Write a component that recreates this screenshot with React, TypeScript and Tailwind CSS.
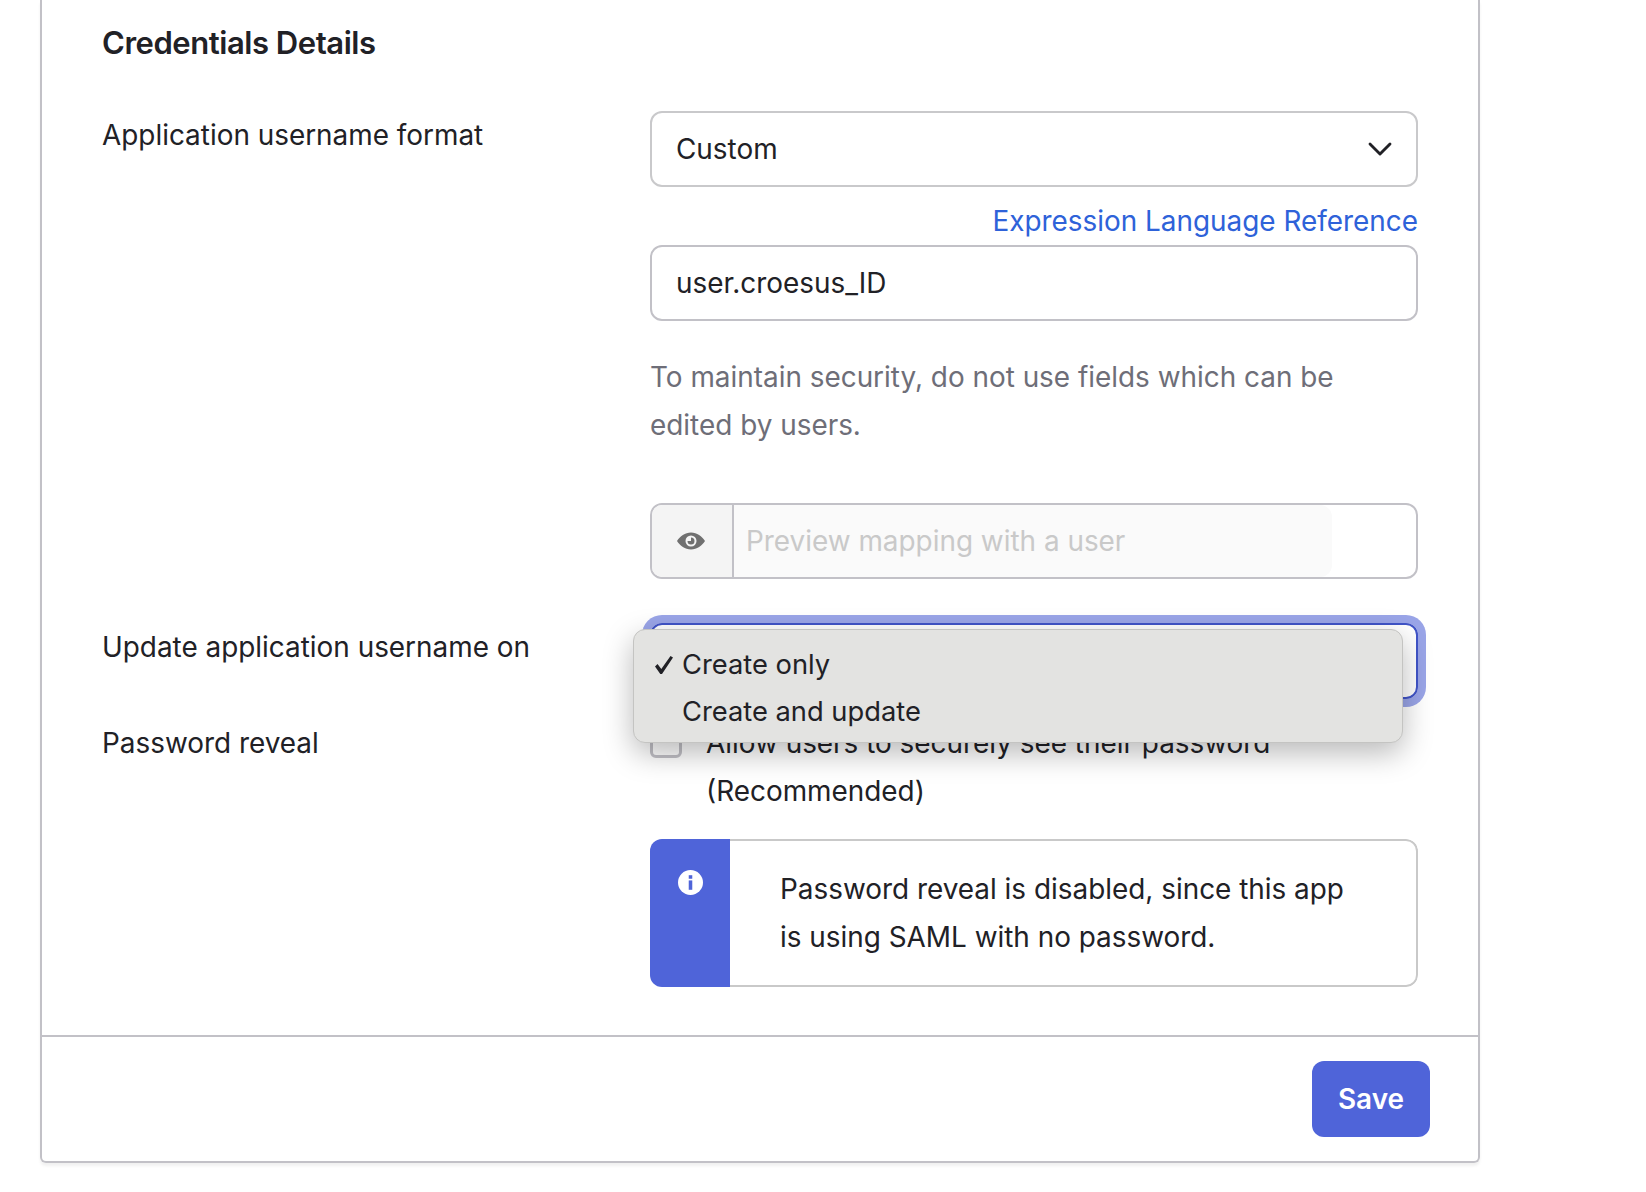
import { ChevronDown } from 'lucide-react'

const inter = "font-['Inter',sans-serif]"

function EyeIcon() {
  return (
    <svg width="28" height="18" viewBox="0 0 28 18" className="text-[#707070]">
      <path
        fillRule="evenodd"
        fill="currentColor"
        d="M14 0.500C20 0.500 25 4.300 28 9C25 13.700 20 17.500 14 17.500C8 17.500 3 13.700 0 9C3 4.300 8 0.500 14 0.500ZM14 3.500A5.500 5.500 0 1 0 14 14.500A5.500 5.500 0 1 0 14 3.500ZM14 5.500A3.500 3.500 0 1 1 10.500 9H14Z"
      />
    </svg>
  )
}

function InfoIcon() {
  return (
    <svg width="25" height="25" viewBox="0 0 24 24">
      <circle cx="12" cy="12" r="12" fill="#fff" />
      <rect x="10.300" y="10" width="3.400" height="9" fill="#4f64d9" />
      <rect x="10.300" y="5" width="3.400" height="3.400" fill="#4f64d9" />
    </svg>
  )
}

function MenuCheck() {
  return (
    <svg width="20" height="20" viewBox="0 0 20 20" className="text-[#212126]">
      <path fill="currentColor" d="M1 11.500L3.500 9L7.300 14L16.500 1L19 2.500L8 19H6.300Z" />
    </svg>
  )
}

export default function App() {
  return (
    <div className={`${inter} h-[1192px] w-[1646px] overflow-hidden bg-white text-[27.900px] leading-[48px] text-[#212126]`}>
      <div className="relative ml-[40px] w-[1440px] rounded-b-[6px] border-x-2 border-b-2 border-[#c2c1c7] pb-[24px] shadow-[0_3px_3px_rgba(0,0,0,0.06)]">
        <h2 className="pl-[60px] pt-[19px] text-[31px] font-semibold leading-[48px] tracking-[-0.45px]">
          Credentials Details
        </h2>

        <div className="mt-[44px] flex pl-[60px]">
          <div className="w-[548px]">Application username format</div>
          <div className="w-[768px]">
            <div className="flex h-[76px] items-center justify-between rounded-[12px] border-2 border-[#c9c9cb] pl-[24px] pr-[16px]">
              <span>Custom</span>
              <ChevronDown size={40} strokeWidth={1.7} className="text-[#212126]" />
            </div>
            <div className="mt-[12px] text-right leading-[44px] text-[#2e62d9]">Expression Language Reference</div>
            <div className="mt-[2px] flex h-[76px] items-center rounded-[12px] border-2 border-[#c2c1c7] pl-[24px]">
              user.croesus_ID
            </div>
            <p className="mt-[32px] text-[#6e6e78]">
              To maintain security, do not use fields which can be edited by users.
            </p>
            <div className="mt-[54px] flex h-[76px] overflow-hidden rounded-[12px] border-2 border-[#c2c1c7]">
              <div className="flex w-[82px] items-center justify-center border-r-2 border-[#c2c1c7] bg-[#f4f4f4] pr-[3px]">
                <EyeIcon />
              </div>
              <div className="flex w-[598px] items-center rounded-r-[12px] bg-[#fafafa] pl-[12px] text-[#c9c9c9]">
                Preview mapping with a user
              </div>
            </div>
          </div>
        </div>

        <div className="mt-[44px] flex pl-[60px]">
          <div className="w-[548px]">Update application username on</div>
          <div className="h-[76px] w-[768px] rounded-[12px] border-2 border-[#4054c8] shadow-[0_0_0_8px_#9aa5e8]" />
        </div>

        <div className="mt-[20px] flex pl-[60px]">
          <div className="w-[548px]">Password reveal</div>
          <div className="w-[768px]">
            <div className="flex">
              <div className="mt-[7px] h-[32px] w-[32px] shrink-0 rounded-[6px] border-[3px] border-[#c2c1c7]" />
              <span className="pl-[24px]">Allow users to securely see their password (Recommended)</span>
            </div>
            <div className="mt-[24px] flex h-[148px] overflow-hidden rounded-[12px]">
              <div className="flex w-[80px] shrink-0 justify-center bg-[#4f64d9] pt-[31px]">
                <InfoIcon />
              </div>
              <p className="flex-1 rounded-r-[12px] border-y-2 border-r-2 border-[#c9c9c9] pl-[50px] pr-[60px] pt-[24px]">
                Password reveal is disabled, since this app is using SAML with no password.
              </p>
            </div>
          </div>
        </div>

        <div className="mt-[48px] flex justify-end border-t-2 border-[#c2c1c7] pr-[48px] pt-[24px]">
          <button type="button" className="h-[76px] w-[118px] rounded-[12px] bg-[#4f64d9] font-semibold text-white">
            Save
          </button>
        </div>

        {/* native select menu, open over the focused field */}
        <div className="absolute left-[591px] top-[629px] h-[114px] w-[770px] rounded-[12px] border border-[#c4c4c2] bg-[#e3e3e1] py-[12px] pl-[20px] text-[27.300px] leading-[46px] shadow-[0_10px_30px_rgba(0,0,0,0.28)]">
          <div className="flex items-center">
            <span className="w-[28px]"><MenuCheck /></span>Create only
          </div>
          <div className="mt-[1px] pl-[28px]">Create and update</div>
        </div>
      </div>
    </div>
  )
}
